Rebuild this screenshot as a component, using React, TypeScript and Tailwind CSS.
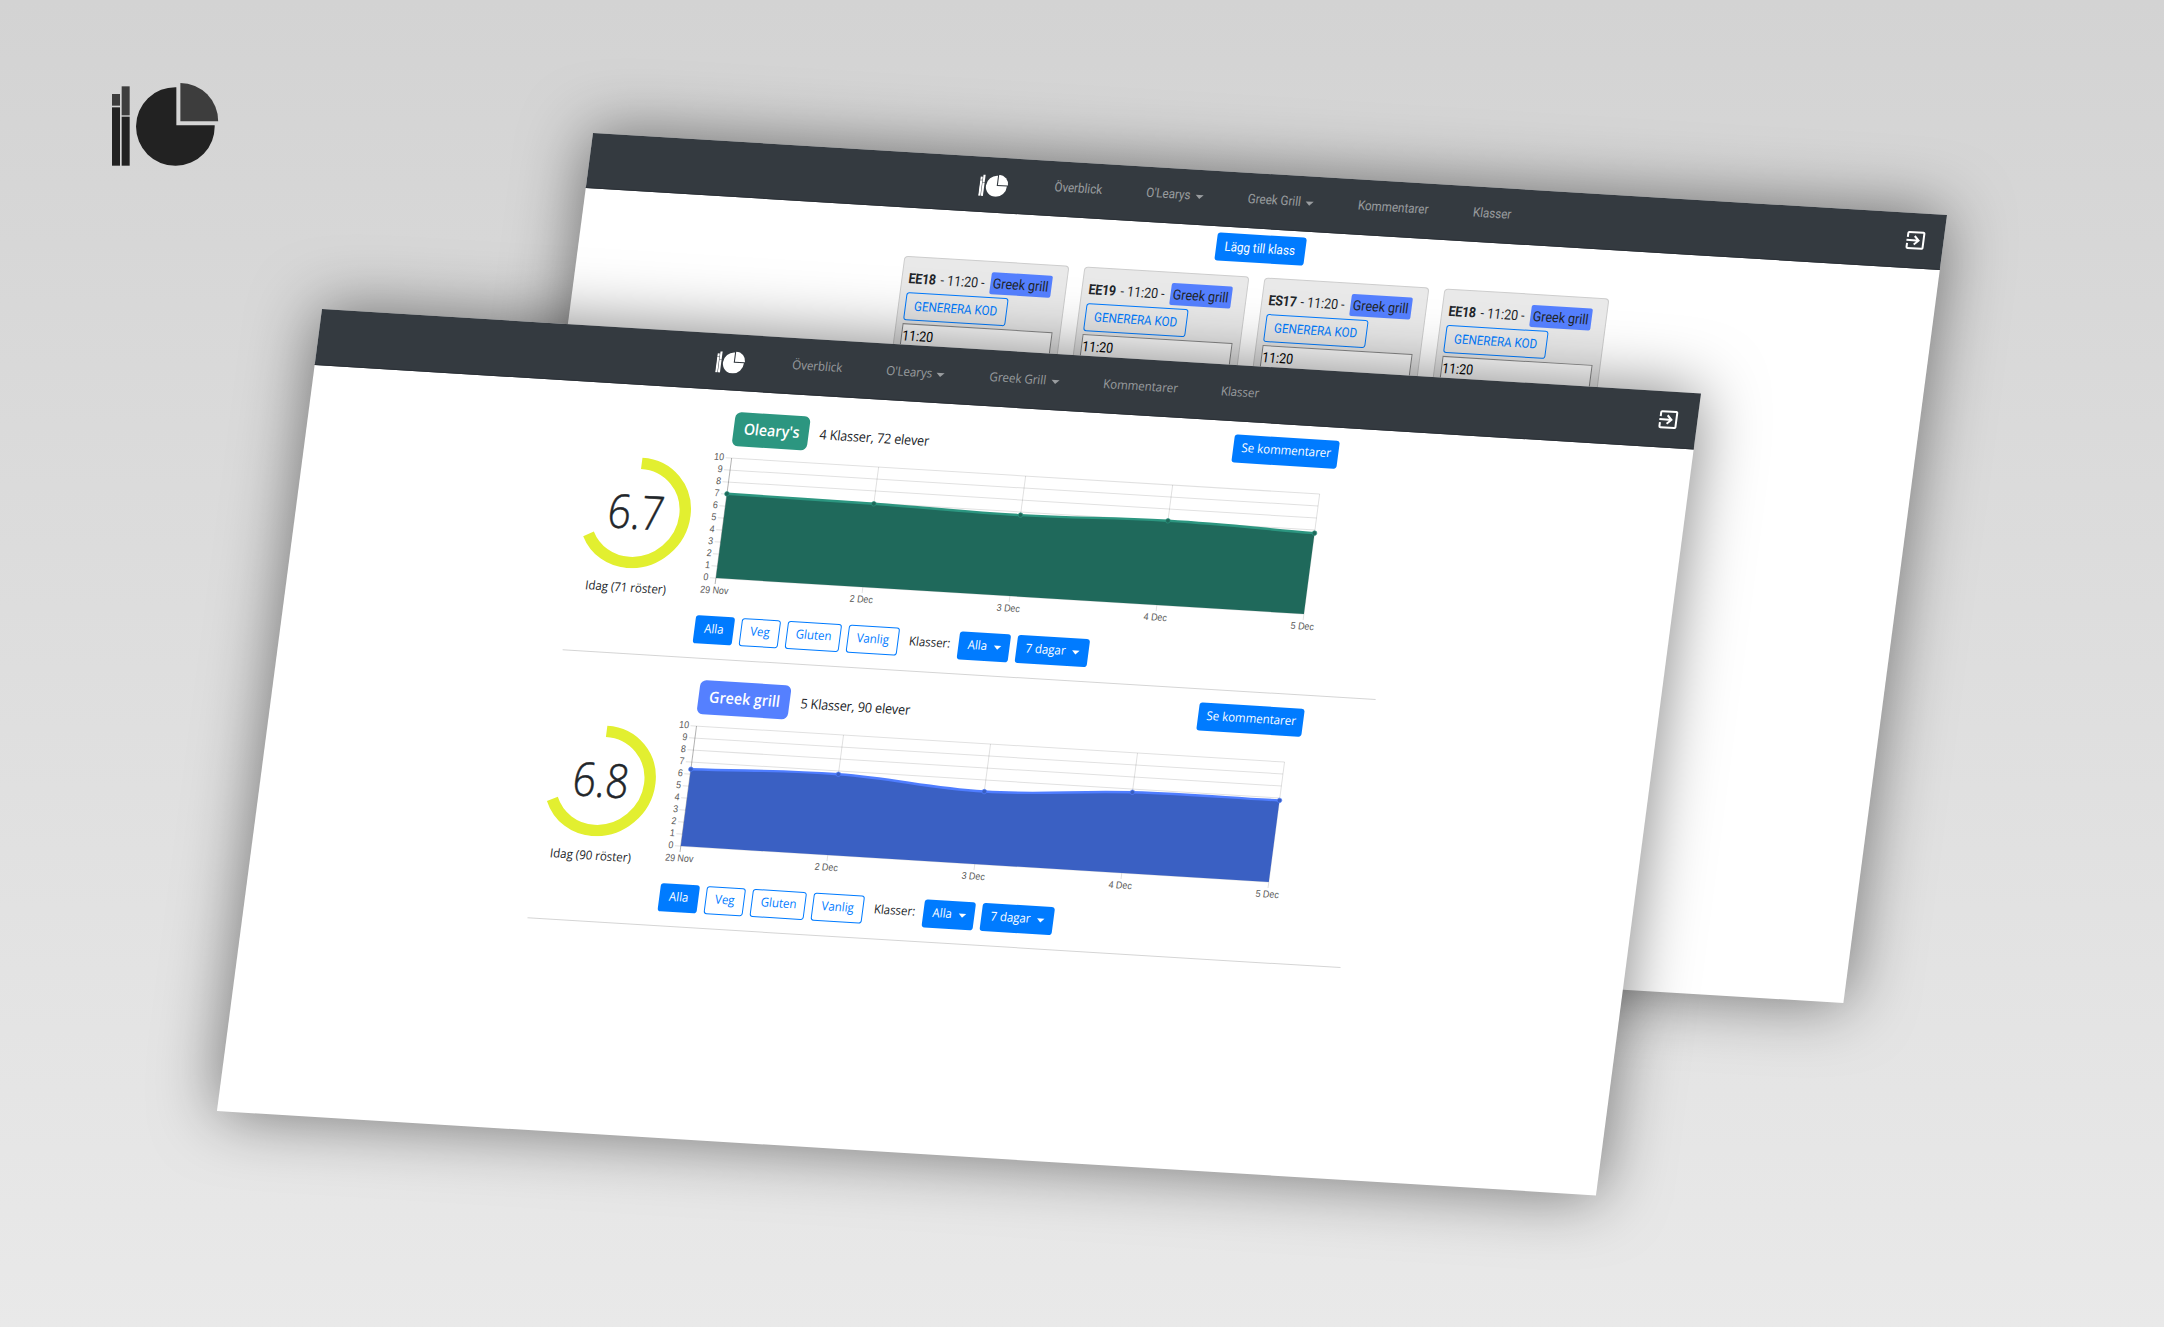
import React from "react";
import { MdExitToApp } from "react-icons/md";

function Logo({ className, main, accent }: { className: string; main: string; accent: string }) {
  return (
    <svg viewBox="0 0 320 248" className={className}>
      <rect x="0" y="33" width="24" height="35" fill={accent} />
      <rect x="0" y="73" width="24" height="175" fill={main} />
      <rect x="29" y="10" width="24" height="87" fill={accent} />
      <rect x="29" y="101" width="24" height="147" fill={main} />
      <path d="M193 127 H308 A118 118 0 1 1 193 12.5 Z" fill={main} />
      <path d="M205 115 V0 A114 114 0 0 1 318.500 115 Z" fill={accent} />
    </svg>
  );
}

function Caret({ className = "" }: { className?: string }) {
  return (
    <span
      className={`inline-block border-x-[4px] border-t-[4px] border-x-transparent border-t-current ${className}`}
    />
  );
}

/* Horizontally condensed text; each window sets its own --narrow ratio. */
function Narrow({ children, className = "" }: { children: React.ReactNode; className?: string }) {
  return (
    <span className={`flex shrink-0 scale-x-[var(--narrow)] items-center whitespace-nowrap ${className}`}>
      {children}
    </span>
  );
}

type NavItem = { label: string; width: string; caret?: boolean };

type NavProps = { items: NavItem[]; className: string; itemClass: string; labelClass: string };

function NavBar({ items, className, itemClass, labelClass }: NavProps) {
  return (
    <nav className={`flex items-center border-b border-[#2b3036] bg-[#343a40] text-white/50 ${className}`}>
      <Logo className="mt-px h-[22px] w-[29px] shrink-0" main="#fff" accent="#fff" />
      {items.map((it) => (
        <div key={it.label} className={`flex shrink-0 items-center ${itemClass}`}>
          <span className={`flex justify-center ${it.width}`}>
            <Narrow className={labelClass}>{it.label}</Narrow>
          </span>
          {it.caret && <Caret className="ml-[6px]" />}
        </div>
      ))}
      <MdExitToApp className="mr-[16.500px] ml-auto size-6 shrink-0 text-white" />
    </nav>
  );
}

const frontItems: NavItem[] = [
  { label: "Överblick", width: "w-[48px]" },
  { label: "O'Learys", width: "w-[43px]", caret: true },
  { label: "Greek Grill", width: "w-[54px]", caret: true },
  { label: "Kommentarer", width: "w-[70px]" },
  { label: "Klasser", width: "w-[36px]" },
];

const backItems: NavItem[] = [
  { label: "Överblick", width: "w-[47px]" },
  { label: "O'Learys", width: "w-[43px]", caret: true },
  { label: "Greek Grill", width: "w-[52px]", caret: true },
  { label: "Kommentarer", width: "w-[70px]" },
  { label: "Klasser", width: "w-[38px]" },
];

const X0 = 14.75;
const STEP = 147;
const Y0 = 7;
const UNIT = 12;
const BOTTOM = Y0 + 10 * UNIT;
const days = ["29 Nov", "2 Dec", "3 Dec", "4 Dec", "5 Dec"];

/* Smooth curve through the points, tension 0.4. */
function curve(pts: number[][]) {
  const t = 0.4;
  let d = `M${pts[0][0]} ${pts[0][1]}`;
  const ctrl = pts.map((p, i) => {
    const a = pts[Math.max(i - 1, 0)];
    const b = pts[Math.min(i + 1, pts.length - 1)];
    const d1 = Math.hypot(p[0] - a[0], p[1] - a[1]);
    const d2 = Math.hypot(b[0] - p[0], b[1] - p[1]);
    const fa = (t * d1) / (d1 + d2);
    const fb = (t * d2) / (d1 + d2);
    return {
      prev: [p[0] - fa * (b[0] - a[0]), p[1] - fa * (b[1] - a[1])],
      next: [p[0] + fb * (b[0] - a[0]), p[1] + fb * (b[1] - a[1])],
    };
  });
  for (let i = 1; i < pts.length; i++) {
    d += ` C${ctrl[i - 1].next.join(" ")} ${ctrl[i].prev.join(" ")} ${pts[i].join(" ")}`;
  }
  return d;
}

type AxisTextProps = { x: number; y: number; anchor: "end" | "middle"; children: React.ReactNode };

function AxisText({ x, y, anchor, children }: AxisTextProps) {
  return (
    <text transform={`translate(${x} ${y}) scale(0.9 1)`} fontSize="9.900" fill="#5a5a5a" textAnchor={anchor}>
      {children}
    </text>
  );
}

function Chart({ values, line, fill }: { values: number[]; line: string; fill: string }) {
  const pts = values.map((v, i) => [X0 + i * STEP, BOTTOM - v * UNIT]);
  const right = X0 + 4 * STEP;
  const d = curve(pts);
  return (
    <svg width="617" height="152" className="block overflow-visible font-['Liberation_Sans',sans-serif]">
      {Array.from({ length: 11 }, (_, i) => (
        <g key={i}>
          <line x1={X0 - 6} x2={right} y1={Y0 + i * UNIT} y2={Y0 + i * UNIT} stroke="#000" strokeOpacity="0.12" />
          <AxisText x={X0 - 7.5} y={Y0 + i * UNIT + 2.8} anchor="end">
            {10 - i}
          </AxisText>
        </g>
      ))}
      {days.map((day, i) => (
        <g key={day}>
          <line
            x1={X0 + i * STEP}
            x2={X0 + i * STEP}
            y1={Y0}
            y2={BOTTOM + 6}
            stroke="#000"
            strokeOpacity={i === 0 ? 0.3 : 0.12}
          />
          <AxisText x={X0 + i * STEP} y={BOTTOM + 15.4} anchor="middle">
            {day}
          </AxisText>
        </g>
      ))}
      <path d={`${d} L${right} ${BOTTOM} L${X0} ${BOTTOM} Z`} fill={fill} />
      <path d={d} fill="none" stroke={line} strokeWidth="2.4" />
      {pts.map((p) => (
        <circle key={p[0]} cx={p[0]} cy={p[1]} r="2.300" fill={fill} stroke={line} strokeWidth="0.6" />
      ))}
    </svg>
  );
}

function Gauge({ value }: { value: number }) {
  const r = 49.6;
  const c = 2 * Math.PI * r;
  return (
    <div className="grid size-[110.5px] place-items-center">
      <svg viewBox="0 0 110.500 110.500" className="col-start-1 row-start-1 size-full -rotate-90">
        <circle
          cx="55.250"
          cy="55.250"
          r={r}
          fill="none"
          stroke="#e2ef30"
          strokeWidth="11.3"
          strokeDasharray={`${(c * value) / 10} ${c}`}
        />
      </svg>
      <span className="col-start-1 row-start-1 mb-[3px] ml-[2px] scale-x-[0.87] text-[46.5px] leading-none font-light [-webkit-text-stroke:0.6px_#212529]">
        {value.toFixed(1)}
      </span>
    </div>
  );
}

const solid = "flex h-[28px] items-center justify-center rounded-[3px] bg-[#007bff] text-white";
const outline =
  "flex h-[28px] items-center justify-center rounded-[3px] border border-[#007bff] text-[#007bff]";

type PlaceProps = {
  name: string;
  badge: string;
  info: string;
  score: number;
  votes: string;
  values: number[];
  line: string;
  fill: string;
};

function Place({ name, badge, info, score, votes, values, line, fill }: PlaceProps) {
  return (
    <section className="mx-auto flex h-[268px] w-[813px] border-b border-black/17">
      <div className="-ml-[0.500px] flex w-[110px] shrink-0 flex-col items-center pt-[71.500px]">
        <Gauge value={score} />
        <Narrow className="mt-[11px] h-[18px]">{votes}</Narrow>
      </div>
      <div className="ml-[19px] flex w-[616px] shrink-0 flex-col">
        <div className="flex h-[60px] items-start pl-[13px]">
          <span
            className={`mt-[20.500px] flex h-[34px] items-center justify-center rounded-[6px] text-[15.3px] font-semibold text-white ${badge}`}
          >
            <Narrow>{name}</Narrow>
          </span>
          <Narrow className="mt-[28.500px] ml-[10.500px] h-[20px] origin-left text-[13.5px] tracking-[-0.15px]">
            {info}
          </Narrow>
          <button className={`${solid} mt-[12.500px] ml-auto w-[105px] shrink-0`}>
            <Narrow>Se kommentarer</Narrow>
          </button>
        </div>
        <Chart values={values} line={line} fill={fill} />
        <div className="mt-[12.500px] flex items-center">
          <button className={`${solid} w-[39px]`}>
            <Narrow>Alla</Narrow>
          </button>
          <button className={`${outline} ml-[7px] w-[39px]`}>
            <Narrow>Veg</Narrow>
          </button>
          <button className={`${outline} ml-[7px] w-[54px]`}>
            <Narrow>Gluten</Narrow>
          </button>
          <button className={`${outline} ml-[7px] w-[51px]`}>
            <Narrow>Vanlig</Narrow>
          </button>
          <span className="ml-[11px] flex w-[39px] justify-center">
            <Narrow>Klasser:</Narrow>
          </span>
          <button className={`${solid} ml-[10px] w-[51px]`}>
            <Narrow>
              Alla <Caret className="ml-[7px]" />
            </Narrow>
          </button>
          <button className={`${solid} ml-[7px] w-[72px]`}>
            <Narrow>
              7 dagar <Caret className="ml-[7px]" />
            </Narrow>
          </button>
        </div>
      </div>
    </section>
  );
}

function ClassCard({ name }: { name: string }) {
  return (
    <div className="h-[200px] w-[165px] rounded-[4px] border border-[#cdcdcd] bg-[#e9e9e9] pt-[10px] pl-[6.500px]">
      <div className="flex h-[22px] items-center text-[14px]">
        <span className="flex w-[29px] font-bold tracking-[-0.3px]">
          <Narrow className="origin-left">{name}</Narrow>
        </span>
        <span className="ml-[3px] flex w-[50px]">
          <Narrow className="origin-left">- 11:20 -</Narrow>
        </span>
        <span className="flex h-[22px] w-[60.500px] items-center justify-center rounded-[2px] bg-[#5580ff]">
          <Narrow>Greek grill</Narrow>
        </span>
      </div>
      <button className={`${outline} mt-[3px] w-[102px]`}>
        <Narrow>GENERERA KOD</Narrow>
      </button>
      <div className="mt-[3px] flex h-[25px] w-[150px] items-center border border-[#8a8a8a] bg-white pb-px text-[14px] text-black">
        <Narrow className="origin-left">11:20</Narrow>
      </div>
    </div>
  );
}

export default function App() {
  return (
    <div className="relative h-[1327px] w-[2164px] overflow-hidden bg-linear-to-b from-[#d3d3d3] to-[#e9e9e9]">
      <Logo className="absolute top-[83px] left-[112px] h-[82.700px] w-[106.700px]" main="#222222" accent="#3d3d3d" />

      <div className="absolute top-[133px] left-[593px] h-[788px] w-[1354px] origin-top-left [transform:matrix(1,0.0606,-0.1315,1,0,0)] bg-white font-[Roboto,sans-serif] text-[13px] text-[#212529] shadow-[0_0_65px_rgba(0,0,0,0.5)] [--narrow:0.89]">
        <NavBar
          items={backItems}
          className="h-[55px] pl-[390px]"
          itemClass="ml-[44.400px] first-of-type:ml-[46.500px]"
          labelClass="pb-[2px]"
        />
        <div className="flex flex-col items-center pt-[6px]">
          <button className={`${solid} w-[89px]`}>
            <Narrow>Lägg till klass</Narrow>
          </button>
          <div className="mt-[14px] flex gap-[15px]">
            {["EE18", "EE19", "ES17", "EE18"].map((n, i) => (
              <ClassCard key={i} name={n} />
            ))}
          </div>
        </div>
      </div>

      <div className="absolute top-[309px] left-[322px] h-[802px] w-[1378.500px] origin-top-left [transform:matrix(1,0.0612,-0.131,1,0,0)] bg-white font-['Open_Sans',sans-serif] text-[12.3px] text-[#212529] shadow-[0_0_65px_rgba(0,0,0,0.5)] [--narrow:0.93]">
        <NavBar
          items={frontItems}
          className="h-[56px] pl-[398px]"
          itemClass="ml-[46.300px] first-of-type:ml-[48px]"
          labelClass=""
        />
        <Place
          name="Oleary's"
          badge="w-[75px] bg-[#2c9680]"
          info="4 Klasser, 72 elever"
          score={6.7}
          votes="Idag (71 röster)"
          values={[7.02, 6.94, 6.74, 7.02, 6.74]}
          line="#2c9680"
          fill="#1f695b"
        />
        <Place
          name="Greek grill"
          badge="w-[91px] bg-[#5580ff]"
          info="5 Klasser, 90 elever"
          score={6.8}
          votes="Idag (90 röster)"
          values={[6.4, 6.73, 6.04, 6.73, 6.8]}
          line="#4f7dff"
          fill="#3a60c3"
        />
      </div>
    </div>
  );
}
